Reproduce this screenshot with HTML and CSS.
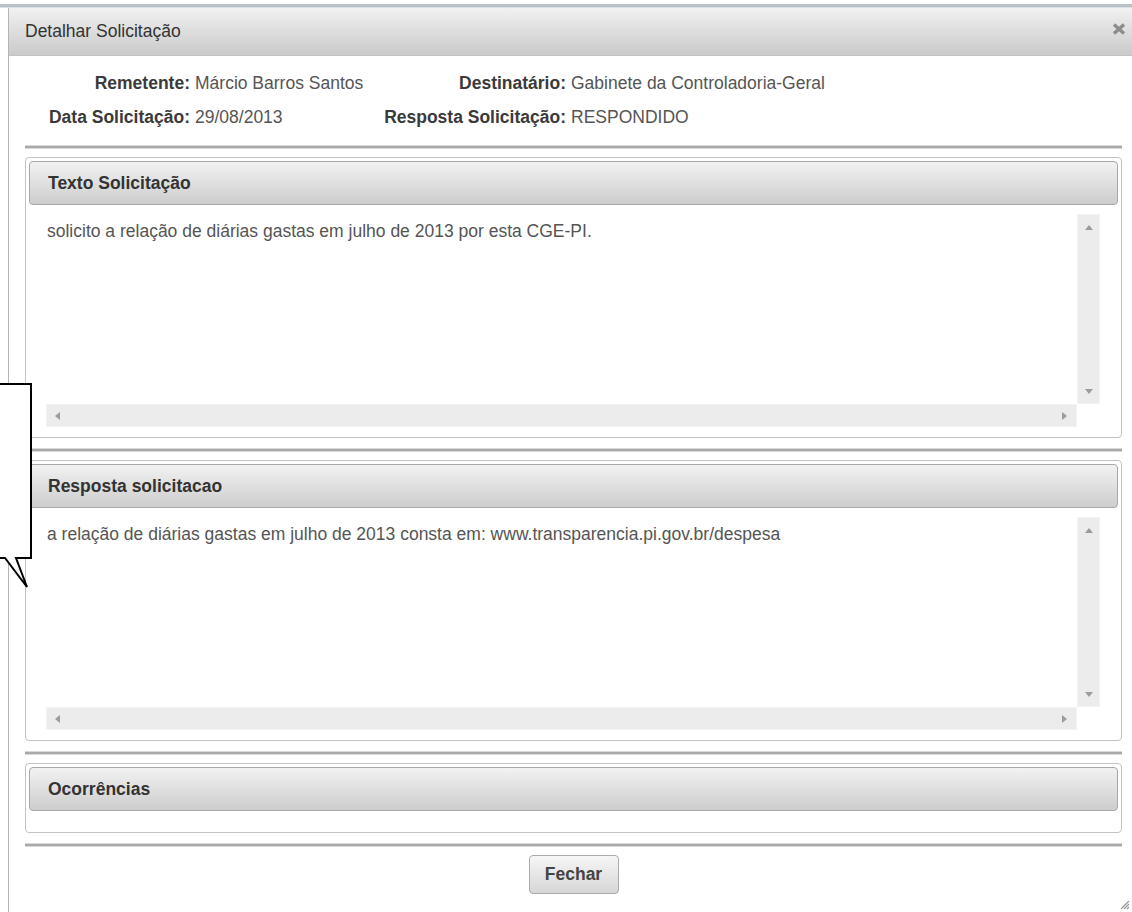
FILE: index.html
```html
<!DOCTYPE html>
<html lang="pt-BR">
<head>
<meta charset="utf-8">
<title>Detalhar Solicitação</title>
<link rel="stylesheet" href="styles.css">
</head>
<body>
<div class="page-top"></div>
<div class="dialog">
  <div class="titlebar">
    <span class="title">Detalhar Solicitação</span>
    <svg class="close" width="14" height="12" viewBox="0 0 14 12" aria-label="Fechar">
      <path d="M2 1.5 L12 10.5 M12 1.5 L2 10.5" stroke="#8c8c8c" stroke-width="3.4" fill="none"/>
    </svg>
  </div>

  <div class="content">
    <div class="info">
      <span class="lbl">Remetente:</span><span class="val">Márcio Barros Santos</span>
      <span class="lbl">Destinatário:</span><span class="val">Gabinete da Controladoria-Geral</span>
      <span class="lbl">Data Solicitação:</span><span class="val">29/08/2013</span>
      <span class="lbl">Resposta Solicitação:</span><span class="val">RESPONDIDO</span>
    </div>

    <div class="sep"></div>

    <section class="panel">
      <div class="panel-head">Texto Solicitação</div>
      <div class="panel-body">
        <div class="textbox">
          <div class="textbox-text">solicito a relação de diárias gastas em julho de 2013 por esta CGE-PI.</div>
          <div class="vscroll"><i class="arr up"></i><i class="arr down"></i></div>
          <div class="hscroll"><i class="arr left"></i><i class="arr right"></i></div>
          <div class="corner"></div>
        </div>
      </div>
    </section>

    <div class="sep"></div>

    <section class="panel">
      <div class="panel-head">Resposta solicitacao</div>
      <div class="panel-body">
        <div class="textbox">
          <div class="textbox-text">a relação de diárias gastas em julho de 2013 consta em: www.transparencia.pi.gov.br/despesa</div>
          <div class="vscroll"><i class="arr up"></i><i class="arr down"></i></div>
          <div class="hscroll"><i class="arr left"></i><i class="arr right"></i></div>
          <div class="corner"></div>
        </div>
      </div>
    </section>

    <div class="sep"></div>

    <section class="panel">
      <div class="panel-head">Ocorrências</div>
      <div class="panel-body panel-body--empty"></div>
    </section>

    <div class="sep"></div>

    <div class="actions">
      <button class="btn" type="button">Fechar</button>
    </div>
  </div>

  <svg class="grip" width="12" height="12" viewBox="0 0 12 12">
    <path d="M11 3 L3 11 M11 6 L6 11 M11 9 L9 11" stroke="#9a9a9a" stroke-width="1.2" fill="none"/>
  </svg>
</div>

<svg class="callout" width="40" height="212" viewBox="0 0 40 212">
  <path d="M-4 4 H31 V178 H16 L27 207 L5 178 H-4 Z" fill="#fff" stroke="#000" stroke-width="2" stroke-linejoin="miter"/>
</svg>
</body>
</html>
```

FILE: styles.css
```css
* {
  box-sizing: border-box;
}

html,
body {
  margin: 0;
  height: 100%;
}

body {
  font-family: "Liberation Sans", Arial, sans-serif;
  font-size: 17.5px;
  color: #555;
  background: #fff;
  overflow: hidden;
  position: relative;
}

/* strip of the overlay showing above the dialog */
.page-top {
  height: 8px;
  border-top: 4px solid #fff;
  border-bottom: 1px solid #dfe2e4;
  background: #b7c1c7;
}

.dialog {
  position: relative;
  margin-left: 8px;
  height: calc(100% - 8px);
  border-left: 1px solid #b4b4b4;
}

.titlebar {
  height: 48px;
  display: flex;
  justify-content: space-between;
  align-items: center;
  padding: 0 6px 0 16px;
  background: linear-gradient(#f1f1f1, #cacaca);
  border-bottom: 1px solid #c2c2c2;
  color: #333;
}

.title {
  font-size: 17.5px;
}

.close {
  align-self: flex-start;
  margin-top: 15px;
}

.content {
  padding: 18px 10px 0 16px;
}

.info {
  display: grid;
  grid-template-columns: 165px 194px 182px 1fr;
  row-gap: 15px;
  line-height: 19px;
}

.lbl {
  text-align: right;
  font-weight: bold;
  color: #3a3a3a;
}

.val {
  padding-left: 5px;
  color: #555;
  white-space: nowrap;
}

.sep {
  height: 2px;
  background: #a9a9a9;
  box-shadow: 0 1px 0 #d9d9d9, 0 -1px 0 #d9d9d9;
  margin: 11px 0 9px;
}

.info + .sep {
  margin-top: 19px;
}

.panel {
  border: 1px solid #c3c3c3;
  border-radius: 4px;
  padding: 3px 3px 0;
}

.panel-head {
  height: 44px;
  display: flex;
  align-items: center;
  padding-left: 18px;
  border: 1px solid #a8a8a8;
  border-radius: 4px;
  background: linear-gradient(#f2f2f2, #cdcdcd);
  font-weight: bold;
  color: #333;
}

.panel-body {
  padding: 9px 18px 10px 17px;
}

.panel-body--empty {
  height: 21px;
  padding: 0;
}

.textbox {
  height: 213px;
  display: grid;
  grid-template-columns: 1fr 23px;
  grid-template-rows: 1fr 23px;
}

.textbox-text {
  padding: 8px 0 0 1px;
  line-height: 19px;
  color: #555;
  white-space: nowrap;
  overflow: hidden;
}

.vscroll,
.hscroll {
  background: #ececec;
  border: 1px solid #f3f3f3;
  display: flex;
  justify-content: space-between;
  align-items: center;
}

.vscroll {
  flex-direction: column;
  padding: 10px 0 9px;
}

.hscroll {
  padding: 0 9px 0 8px;
}

.corner {
  background: #fff;
}

.arr {
  display: block;
  width: 0;
  height: 0;
}

.arr.up {
  border-left: 4px solid transparent;
  border-right: 4px solid transparent;
  border-bottom: 5px solid #9c9c9c;
}

.arr.down {
  border-left: 4px solid transparent;
  border-right: 4px solid transparent;
  border-top: 5px solid #9c9c9c;
}

.arr.left {
  border-top: 4px solid transparent;
  border-bottom: 4px solid transparent;
  border-right: 5px solid #9c9c9c;
}

.arr.right {
  border-top: 4px solid transparent;
  border-bottom: 4px solid transparent;
  border-left: 5px solid #9c9c9c;
}

.actions {
  display: flex;
  justify-content: center;
}

.btn {
  width: 90px;
  height: 39px;
  border: 1px solid #ababab;
  border-radius: 4px;
  background: linear-gradient(#f6f6f6, #d6d6d6);
  font-family: "Liberation Sans", Arial, sans-serif;
  font-size: 17.5px;
  font-weight: bold;
  color: #444;
  padding: 0;
}

/* resize handle in the dialog's corner */
.grip {
  position: absolute;
  right: 2px;
  bottom: 2px;
}

/* annotation balloon drawn over the page's left edge */
.callout {
  position: absolute;
  left: 0;
  top: 380px;
  overflow: visible;
}
```
